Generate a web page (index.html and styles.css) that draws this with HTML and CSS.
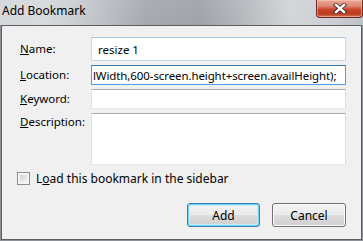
FILE: index.html
```html
<!DOCTYPE html>
<html lang="en">
<head>
    <meta charset="UTF-8">
    <title>Add Bookmark</title>
    <link rel="stylesheet" href="styles.css">
</head>
<body>
    <div class="window">
        <div class="titlebar">
            <span class="title">Add Bookmark</span>
            <button class="close" title="Close">
                <svg width="14" height="11" viewBox="0 0 14 11">
                    <path d="M3 2 L11 9 M11 2 L3 9" stroke="#3a2a2a" stroke-width="4.2" stroke-linecap="square"/>
                    <path d="M3 2 L11 9 M11 2 L3 9" stroke="#ffffff" stroke-width="2.4" stroke-linecap="square"/>
                </svg>
            </button>
        </div>
        <div class="frame">
            <div class="client">
                <div class="fields">
                    <label class="label"><u>N</u>ame:</label>
                    <div class="field name-field"><span>resize 1</span></div>

                    <label class="label"><u>L</u>ocation:</label>
                    <div class="field focus-field"><span>lWidth,600-screen.height+screen.availHeight);</span></div>

                    <label class="label"><u>K</u>eyword:</label>
                    <div class="field"></div>

                    <label class="label top"><u>D</u>escription:</label>
                    <div class="field"></div>
                </div>

                <label class="check-row">
                    <span class="checkbox"></span>
                    <span>L<u>o</u>ad this bookmark in the sidebar</span>
                </label>

                <div class="buttons">
                    <button class="btn default">Add</button>
                    <button class="btn cancel">Cancel</button>
                </div>
            </div>
        </div>
    </div>
</body>
</html>
```

FILE: styles.css
```css
body, html {
    margin: 0;
    padding: 0;
    width: 363px;
    height: 241px;
    overflow: hidden;
    font-family: "Noto Sans", "Open Sans", sans-serif;
    font-size: 12px;
    color: #000;
}
.window {
    display: flex;
    flex-direction: column;
    height: 241px;
    background:
        linear-gradient(to bottom, rgba(255, 255, 255, 0.25), rgba(255, 255, 255, 0) 60%),
        linear-gradient(to right, #c9cdd2 0%, #cdd1d5 12%, #b3b8be 25%, #8f949a 40%, #878c92 55%, #a4a9af 68%, #c6cacf 80%, #bfc3c8 90%, #aeb2b7 100%);
}
.titlebar {
    height: 25px;
    display: flex;
    justify-content: space-between;
    align-items: flex-start;
}
.title {
    padding: 3px 0 0 2px;
    line-height: 16px;
    color: #000;
}
.close {
    width: 47px;
    height: 18px;
    margin: 0;
    padding: 0;
    border: 1px solid #6b2b22;
    border-top: none;
    border-radius: 0 0 4px 4px;
    background: linear-gradient(to bottom, #e9a999 0%, #dd8a74 35%, #c8452b 55%, #bc3a20 80%, #d5724f 100%);
    box-shadow: inset 0 0 0 1px rgba(255, 210, 190, 0.5);
    display: flex;
    justify-content: center;
    align-items: center;
}
.frame {
    flex: 1;
    padding: 0 1px 1px 1px;
    background: #8e9297;
    display: flex;
}
.client {
    flex: 1;
    border: 1px solid #5b5e62;
    background: #f0f0f0;
    padding: 11px 15px 0 18px;
}
.fields {
    display: grid;
    grid-template-columns: 71px 1fr;
    grid-template-rows: 24px 20px 20px 52px;
    row-gap: 4px;
    font-size: 11.5px;
}
.label {
    align-self: center;
    line-height: 16px;
}
.label.top {
    align-self: start;
    padding-top: 1px;
}
.field {
    box-sizing: border-box;
    border: 1px solid #e3e9ef;
    border-top-color: #abadb3;
    border-left-color: #e2e3ea;
    border-right-color: #dbdfe6;
    background: #fff;
    display: flex;
    align-items: center;
    overflow: hidden;
    white-space: nowrap;
}
.name-field {
    border-color: #c5daed;
    border-top-color: #a9c7e3;
    padding-left: 6px;
}
.focus-field {
    border-color: #569de5;
    border-top-color: #3d7bad;
    padding-left: 1px;
    letter-spacing: -0.1px;
}
.check-row {
    display: flex;
    align-items: center;
    gap: 6px;
    margin: 7px 0 0 -3px;
    height: 13px;
    line-height: 16px;
}
.checkbox {
    box-sizing: border-box;
    width: 13px;
    height: 13px;
    border: 1px solid #8e8f8f;
    background: #f4f4f4;
    box-shadow: inset 0 0 0 1px #f4f4f4;
}
.checkbox::after {
    content: "";
    display: block;
    margin: 2px;
    height: 7px;
    background: linear-gradient(to bottom right, #cbcfd5, #f6f6f6);
}
.buttons {
    display: flex;
    justify-content: flex-end;
    gap: 12px;
    margin-top: 18px;
}
.btn {
    box-sizing: border-box;
    width: 73px;
    height: 24px;
    padding: 0;
    border: 1px solid #707070;
    border-radius: 3px;
    background: linear-gradient(to bottom, #f2f2f2 0%, #ebebeb 50%, #dddddd 50%, #cfcfcf 100%);
    box-shadow: inset 0 0 0 1px #fcfcfc;
    font-family: "Noto Sans", "Open Sans", sans-serif;
    font-size: 12px;
    color: #000;
}
.btn.cancel {
    width: 74px;
}
.btn.default {
    border-color: #3c7fb1;
    box-shadow: inset 0 0 0 1px #6fd3f5, inset 0 0 0 2px #c4ecfa;
}
```
